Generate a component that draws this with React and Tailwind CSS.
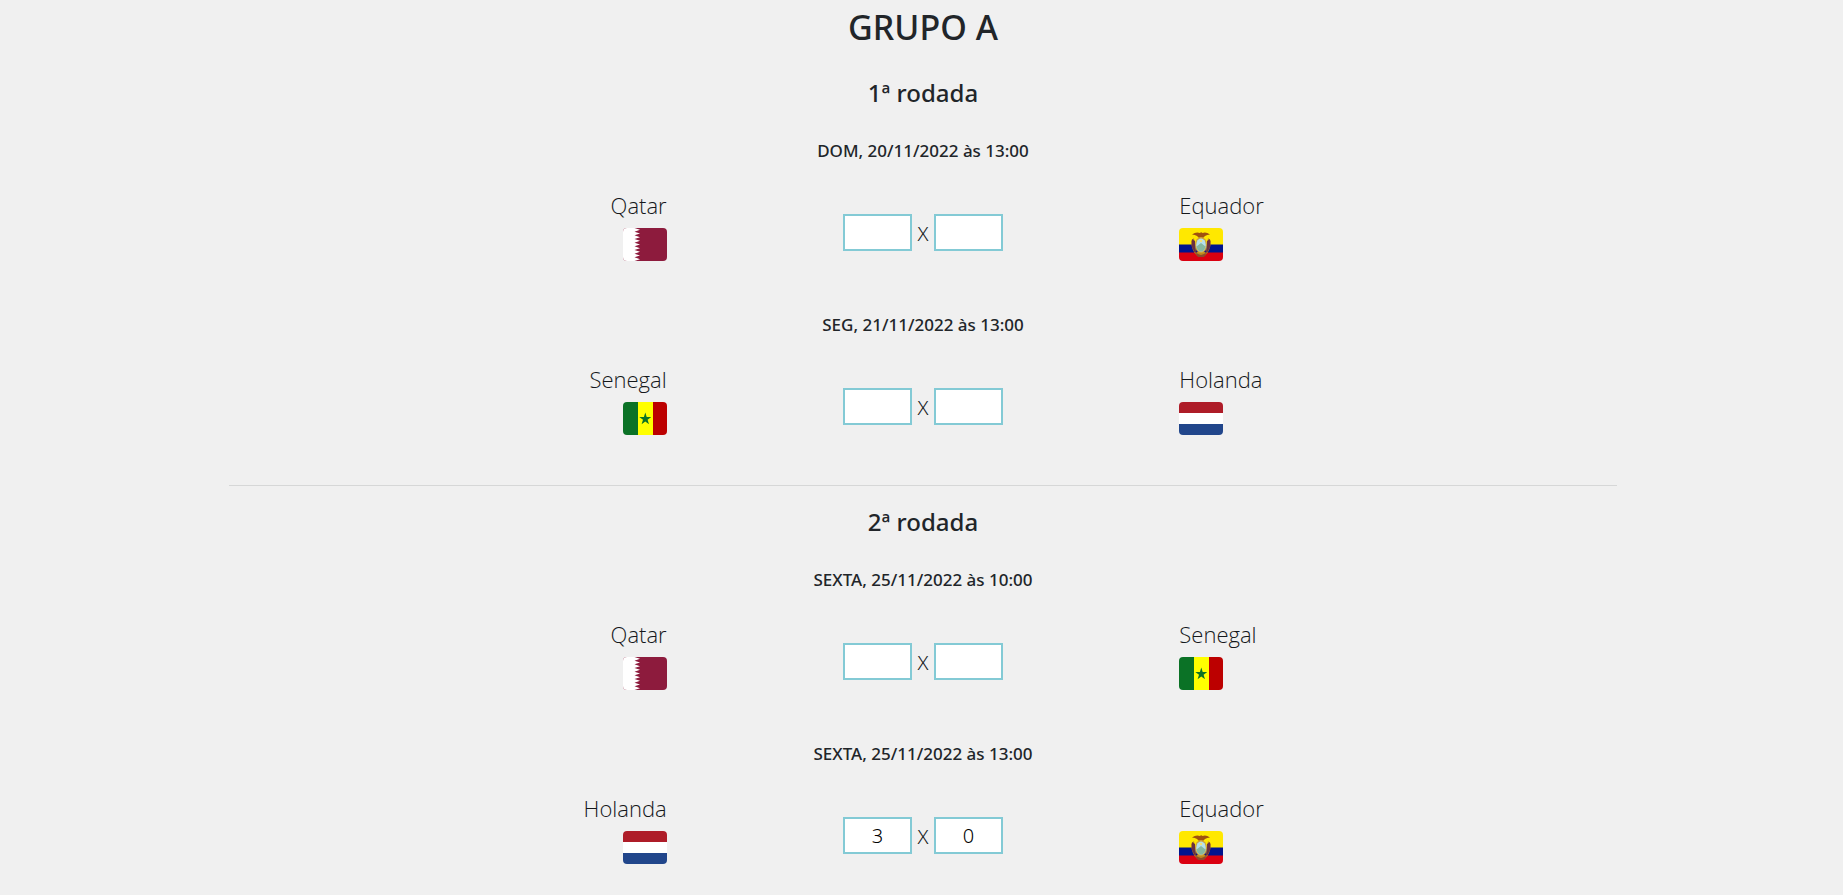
import React from 'react';

function QatarFlag() {
  const teeth = Array.from({ length: 9 }, (_, i) => {
    const y = (i * 33) / 9;
    return `L11.500 ${y} L17 ${y + 33 / 18} L11.500 ${y + 33 / 9}`;
  }).join(' ');
  return (
    <>
      <rect width="44" height="33" fill="#8d1b3d" />
      <path d={`M0 0 ${teeth} L0 33 Z`} fill="#fff" />
    </>
  );
}

function EcuadorFlag() {
  return (
    <>
      <rect width="44" height="17" fill="#ffe800" />
      <rect y="16.5" width="44" height="8.5" fill="#00148e" />
      <rect y="24.5" width="44" height="8.5" fill="#da0010" />
      <path d="M12 13 Q13 24 18 27.500 H26 Q31 24 32 13 L29 10 L27 24 H17 L15 10 Z" fill="#c08a1c" />
      <path d="M13 11 L16 13 V21 L18.500 26 L15 23.500 L12.500 18 Z" fill="#6b3040" />
      <path d="M31 11 L28 13 V21 L25.500 26 L29 23.500 L31.500 18 Z" fill="#6b3040" />
      <path d="M13 6.500 Q17 3.500 21 5 Q22 3.500 23.500 5 Q27 3.500 31 6.500 Q28 6.500 26 8 L24 10 H20 L18 8 Q16 6.500 13 6.500 Z" fill="#a0520f" />
      <ellipse cx="22" cy="17" rx="6" ry="8" fill="#d0a43a" />
      <ellipse cx="22" cy="17" rx="4.800" ry="6.600" fill="#b4e0ee" />
      <path d="M17.500 18.500 L22 15 L26.500 18.500 Q25.500 23.500 22 23.500 Q18.500 23.500 17.500 18.500 Z" fill="#86b9a0" />
      <circle cx="22" cy="13" r="1.300" fill="#f5e37a" />
      <path d="M16 25 L22 27 L28 25 L25 29 H19 Z" fill="#8d4b2a" />
    </>
  );
}

function SenegalFlag() {
  return (
    <>
      <rect width="15" height="33" fill="#0b7226" />
      <rect x="15" width="15" height="33" fill="#ff0" />
      <rect x="30" width="14" height="33" fill="#bc0000" />
      <path d="M22.300 10.500 L23.700 15 H28.300 L24.600 17.700 L26 22.300 L22.300 19.500 L18.600 22.300 L20 17.700 L16.300 15 H20.900 Z" fill="#0b7226" />
    </>
  );
}

function NetherlandsFlag() {
  return (
    <>
      <rect width="44" height="33" fill="#fff" />
      <rect width="44" height="11" fill="#ae1c28" />
      <rect y="22" width="44" height="11" fill="#21468b" />
    </>
  );
}

const flags = {
  Qatar: QatarFlag,
  Equador: EcuadorFlag,
  Senegal: SenegalFlag,
  Holanda: NetherlandsFlag,
};

const rounds = [
  {
    title: '1ª rodada',
    matches: [
      { date: 'DOM, 20/11/2022 às 13:00', home: 'Qatar', away: 'Equador', score: ['', ''] },
      { date: 'SEG, 21/11/2022 às 13:00', home: 'Senegal', away: 'Holanda', score: ['', ''] },
    ],
  },
  {
    title: '2ª rodada',
    matches: [
      { date: 'SEXTA, 25/11/2022 às 10:00', home: 'Qatar', away: 'Senegal', score: ['', ''] },
      { date: 'SEXTA, 25/11/2022 às 13:00', home: 'Holanda', away: 'Equador', score: ['3', '0'] },
    ],
  },
];

function Team({ name, align }) {
  const Flag = flags[name];
  return (
    <div className={`flex flex-col gap-2 px-[25px] ${align}`}>
      <span className="font-['Open_Sans','Noto_Sans',sans-serif] text-[22px] leading-[30px] font-light text-[#15181b]">
        {name}
      </span>
      <svg viewBox="0 0 44 33" className="h-[33px] w-11 rounded" aria-hidden="true">
        <Flag />
      </svg>
    </div>
  );
}

function ScoreInput({ team, value }) {
  return (
    <input
      type="text"
      inputMode="numeric"
      aria-label={`Gols ${team}`}
      defaultValue={value}
      className="h-[37px] w-[69px] border-2 border-[#83cad5] bg-white text-center text-xl font-light text-black outline-none"
    />
  );
}

function Match({ match }) {
  return (
    <article className="flex flex-col gap-7">
      <h3 className="text-center text-[17px] leading-[22px] font-medium">{match.date}</h3>
      <div className="grid grid-cols-3">
        <Team name={match.home} align="items-end" />
        <div className="flex items-start justify-center gap-[5px] pt-6">
          <ScoreInput team={match.home} value={match.score[0]} />
          <span className="w-3 text-center text-xl leading-10 font-light text-[#15181b]">X</span>
          <ScoreInput team={match.away} value={match.score[1]} />
        </div>
        <Team name={match.away} align="items-start" />
      </div>
    </article>
  );
}

export default function App() {
  return (
    <main className="min-h-screen bg-[#f0f0f0] pt-1.5 pl-[3px] font-['Noto_Sans','Open_Sans',sans-serif] text-[#212529]">
      <div className="mx-auto max-w-[1388px]">
        <h1 className="text-center text-[34px] leading-[42px] font-medium">GRUPO A</h1>
        {rounds.map((round, i) => (
          <section
            key={round.title}
            className={i === 0 ? 'pt-[30px]' : 'mt-[50px] border-t border-[#d6d7d7] pt-[21px]'}
          >
            <h2 className="text-center text-2xl leading-[30px] font-medium">{round.title}</h2>
            <div className="mt-8 flex flex-col gap-[53px]">
              {round.matches.map((match) => (
                <Match key={match.date} match={match} />
              ))}
            </div>
          </section>
        ))}
      </div>
    </main>
  );
}
